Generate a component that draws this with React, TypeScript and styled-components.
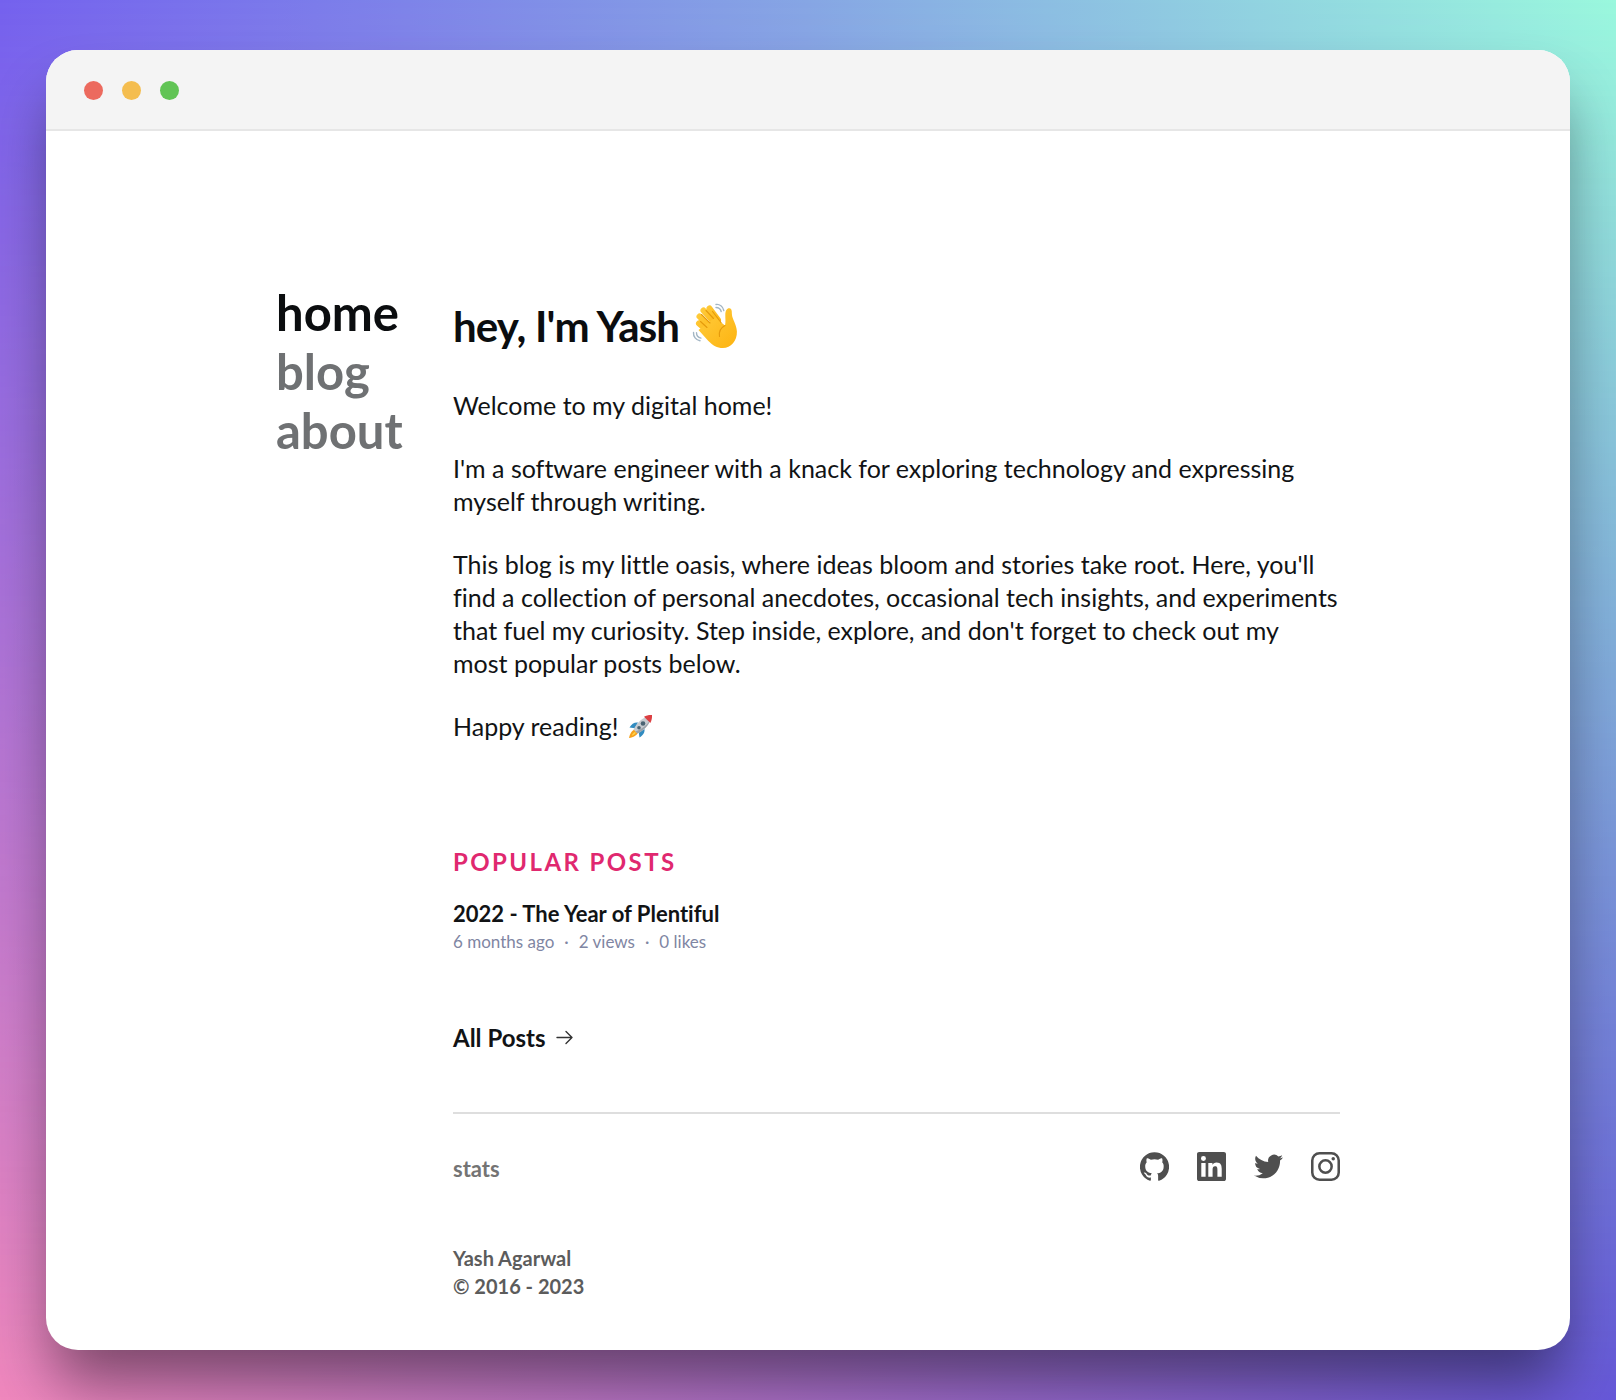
import React from "react";
import styled, { createGlobalStyle } from "styled-components";

const GlobalStyle = createGlobalStyle`
  * { box-sizing: border-box; margin: 0; padding: 0; }
  body {
    font-family: Lato, "Liberation Sans", sans-serif;
    font-variant-ligatures: none;
    color: #111315;
  }
  a { color: inherit; text-decoration: none; }
  svg { display: block; flex: none; }
`;

const Backdrop = styled.div`
  position: relative;
  isolation: isolate;
  min-height: 100vh;
  padding: 50px 46px;
  background: linear-gradient(90deg, #f088bd, #6658d8);
  &::before {
    content: "";
    position: absolute;
    inset: 0;
    z-index: -1;
    background: linear-gradient(90deg, #7461ee, #86a6e4 50%, #9af8dd);
    mask-image: linear-gradient(#000, transparent);
  }
`;

const Window = styled.div`
  border-radius: 32px;
  overflow: hidden;
  background: #fff;
  box-shadow: 0 40px 60px -8px rgba(0, 0, 0, 0.45);
`;

const TitleBar = styled.div`
  display: flex;
  align-items: center;
  gap: 19px;
  height: 81px;
  padding: 2px 38px 0;
  background: #f4f4f4;
  border-bottom: 2px solid #e6e6e6;
`;

const Dot = styled.span<{ $color: string }>`
  width: 19px;
  height: 19px;
  border-radius: 50%;
  background: ${(p) => p.$color};
`;

const Page = styled.div`
  display: grid;
  grid-template-columns: 177px minmax(0, 1fr);
  max-width: 1064px;
  margin: 0 auto;
  padding: 152px 0 50px;
`;

const Nav = styled.nav`
  display: flex;
  flex-direction: column;
  align-items: flex-start;
`;

const NavLink = styled.a<{ $active?: boolean }>`
  font-size: 49px;
  line-height: 59px;
  font-weight: 700;
  color: ${(p) => (p.$active ? "#0b0d0f" : "#6f7173")};
`;

const Title = styled.h1`
  display: flex;
  align-items: center;
  gap: 13px;
  padding-top: 18px;
  margin-bottom: 38px;
  font-size: 42px;
  line-height: 50px;
  font-weight: 700;
  letter-spacing: -0.02em;
  color: #0b0d0f;
`;

const Prose = styled.div`
  display: flex;
  flex-direction: column;
  gap: 30px;
  font-size: 25px;
  line-height: 33px;
`;

const Inline = styled.p`
  display: flex;
  align-items: center;
  gap: 10px;
`;

const SectionTitle = styled.h2`
  margin-top: 102px;
  font-size: 24px;
  line-height: 33px;
  font-weight: 700;
  letter-spacing: 0.1em;
  color: #e0286f;
`;

const PostTitle = styled.h3`
  margin-top: 21px;
  font-size: 22px;
  line-height: 29px;
  font-weight: 700;
`;

const Meta = styled.ul`
  display: flex;
  list-style: none;
  font-size: 17px;
  line-height: 28px;
  color: #7f86a3;
  li + li::before {
    content: "·";
    margin: 0 10px;
  }
`;

const AllPosts = styled.a`
  display: inline-flex;
  align-items: center;
  gap: 10px;
  margin-top: 65px;
  font-size: 24px;
  line-height: 33px;
  font-weight: 700;
`;

const Footer = styled.footer`
  margin-top: 58px;
  border-top: 2px solid #dedede;
  padding-top: 38px;
  font-size: 20px;
  line-height: 28px;
  font-weight: 700;
  color: #5c5c5c;
`;

const FooterRow = styled.div`
  display: flex;
  justify-content: space-between;
  align-items: flex-start;
  margin-bottom: 59px;
`;

const StatsLink = styled.a`
  font-size: 22px;
  line-height: 33px;
  color: #747474;
`;

const Socials = styled.div`
  display: flex;
  gap: 28px;
  color: #4f4f4f;
`;

const Wave = () => (
  <svg width="46" height="46" viewBox="0 0 46 46" role="img" aria-label="waving hand">
    <defs>
      <linearGradient id="skin" x1="0" y1="0" x2="1" y2="1">
        <stop offset="0" stopColor="#ffcd3e" />
        <stop offset="1" stopColor="#fdb310" />
      </linearGradient>
    </defs>
    <g fill="none" stroke="#a3b6c4" strokeWidth="1.4" strokeLinecap="round">
      <path d="M24 1.500c3.500-.6 7 2 7.800 6M24 4.500c2.600 0 4.600 1.600 5.200 4" />
      <path d="M1.500 29.500c-.3 4 2.400 7.500 6.500 8.200M4.500 29.800c0 2.700 1.700 4.700 4.400 5.300" />
    </g>
    <g fill="none" stroke="url(#skin)" strokeWidth="6" strokeLinecap="round">
      <path d="M22 19 11.500 7.500M26 17 17.500 5.500M18 24 7.500 13.500M17 29 7 20.500" />
    </g>
    <path
      fill="url(#skin)"
      d="M24 14c4 4 6.500 7 9 8.500.9-3.500.2-7 .3-11 .1-4.300 1.900-6.700 4.300-6.300 2.200.4 2.300 2.900 2.300 5.800.1 5 4.600 10 5 17.500.4 9-6 16.500-14 16.500-6 0-10-2.500-14.500-7L6.500 27z"
    />
    <path
      fill="none"
      stroke="#e59a0c"
      strokeWidth="1.100"
      strokeLinecap="round"
      d="M21.500 15.500 14 7.500M18 20 9.500 11.500M15 24.500 8.500 18.500M29 19.500l-8.500-11M33 22.500c-4.500 2.500-6.500 6-5.500 11"
    />
  </svg>
);

const Rocket = () => (
  <svg width="25" height="25" viewBox="0 0 25 25" role="img" aria-label="rocket">
    <path fill="#f7a11b" d="M7 15.500c-3 .5-5 4-6 8.500 4.500-.7 8-2.500 9-5.500z" />
    <path fill="#fcd34b" d="M7 18c-1.500.6-2.700 2-3.300 3.800 1.800-.5 3.400-1.600 4.200-3z" />
    <path fill="#328cc0" d="M10 8.500C6.500 8 3.500 10 1.500 13.500l5.500.8zM16.500 15c.5 3.500-1.500 6.500-5 8.500l-.8-5.500z" />
    <path fill="#c7cbd0" d="M22.800 2.200C16 2 9.500 7.500 5.500 15.500l4 4C17.500 15.500 23 9 22.800 2.200z" />
    <path fill="#9ba2a9" d="m22 6.500c-2 5.500-6.500 10-12.500 13l-2-2C14 15 18.500 11.500 22 6.500z" />
    <path fill="#dc3f42" d="M24 1c-3-.2-5.800.5-8 1.700l6.300 6.300C23.600 6.800 24.200 4 24 1z" />
    <circle cx="15" cy="9.500" r="2.300" fill="#4a6473" />
    <circle cx="11" cy="13.800" r="1.800" fill="#4a6473" />
  </svg>
);

const Arrow = () => (
  <svg width="17" height="15" viewBox="0 0 17 15" fill="none" stroke="#333" strokeWidth="1.400" strokeLinecap="round" strokeLinejoin="round" aria-hidden="true">
    <path d="M1 7.500h15M10 1.500l6 6-6 6" />
  </svg>
);

const icons = [
  {
    label: "GitHub",
    d: "M12 .3a12 12 0 0 0-3.800 23.400c.6.1.8-.3.8-.6v-2c-3.300.7-4-1.600-4-1.600-.6-1.400-1.400-1.800-1.400-1.800-1-.7.1-.7.1-.7 1.200 0 1.900 1.200 1.900 1.200 1 1.800 2.800 1.300 3.500 1 0-.8.4-1.300.7-1.600-2.700-.3-5.500-1.300-5.500-6 0-1.200.5-2.300 1.300-3.100-.2-.4-.6-1.600 0-3.200 0 0 1-.3 3.400 1.200a11.500 11.500 0 0 1 6 0c2.300-1.500 3.300-1.200 3.300-1.200.6 1.600.2 2.800 0 3.200.9.800 1.300 1.900 1.300 3.200 0 4.600-2.800 5.600-5.500 5.900.5.400.9 1 .9 2.200v3.300c0 .3.100.7.800.6A12 12 0 0 0 12 .3",
  },
  {
    label: "LinkedIn",
    d: "M20.447 20.452h-3.554v-5.569c0-1.328-.027-3.037-1.852-3.037-1.853 0-2.136 1.445-2.136 2.939v5.667H9.351V9h3.414v1.561h.046c.477-.9 1.637-1.850 3.370-1.850 3.601 0 4.267 2.370 4.267 5.455v6.286zM5.337 7.433a2.062 2.062 0 0 1-2.063-2.065 2.064 2.064 0 1 1 2.063 2.065zm1.782 13.019H3.555V9h3.564v11.452zM22.225 0H1.771C.792 0 0 .774 0 1.729v20.542C0 23.227.792 24 1.771 24h20.451C23.200 24 24 23.227 24 22.271V1.729C24 .774 23.200 0 22.222 0h.003z",
  },
  {
    label: "Twitter",
    d: "M23.954 4.569a10 10 0 0 1-2.825.775 4.958 4.958 0 0 0 2.163-2.723c-.951.555-2.005.959-3.127 1.184a4.920 4.920 0 0 0-8.384 4.482C7.691 8.094 4.066 6.130 1.640 3.161a4.822 4.822 0 0 0-.666 2.475c0 1.710.870 3.213 2.188 4.096a4.904 4.904 0 0 1-2.228-.616v.061a4.923 4.923 0 0 0 3.946 4.827 4.996 4.996 0 0 1-2.212.085 4.937 4.937 0 0 0 4.604 3.417 9.868 9.868 0 0 1-6.102 2.105c-.390 0-.779-.023-1.170-.067a13.995 13.995 0 0 0 7.557 2.209c9.054 0 13.999-7.496 13.999-13.986 0-.209 0-.420-.015-.630a9.936 9.936 0 0 0 2.460-2.548l-.047-.020z",
  },
];

const Instagram = () => (
  <svg width="29" height="29" viewBox="0 0 24 24" fill="none" stroke="currentColor" strokeWidth="2.100" aria-hidden="true">
    <rect x="1.050" y="1.050" width="21.900" height="21.900" rx="6" />
    <circle cx="12" cy="12" r="5.100" />
    <circle cx="18.400" cy="5.600" r="1.440" fill="currentColor" stroke="none" />
  </svg>
);

export default function App() {
  return (
    <>
      <GlobalStyle />
      <Backdrop>
        <Window>
          <TitleBar>
            <Dot $color="#ec6a5e" />
            <Dot $color="#f4bd4f" />
            <Dot $color="#61c455" />
          </TitleBar>
          <Page>
            <Nav>
              <NavLink href="#home" $active>home</NavLink>
              <NavLink href="#blog">blog</NavLink>
              <NavLink href="#about">about</NavLink>
            </Nav>
            <main>
              <Title>
                hey, I'm Yash <Wave />
              </Title>
              <Prose>
                <p>Welcome to my digital home!</p>
                <p>
                  I'm a software engineer with a knack for exploring technology and expressing
                  myself through writing.
                </p>
                <p>
                  This blog is my little oasis, where ideas bloom and stories take root. Here, you'll
                  find a collection of personal anecdotes, occasional tech insights, and experiments
                  that fuel my curiosity. Step inside, explore, and don't forget to check out my
                  most&nbsp;popular posts below.
                </p>
                <Inline>
                  Happy reading! <Rocket />
                </Inline>
              </Prose>
              <SectionTitle>POPULAR POSTS</SectionTitle>
              <PostTitle>
                <a href="#post">2022 - The Year of Plentiful</a>
              </PostTitle>
              <Meta>
                <li>6 months ago</li>
                <li>2 views</li>
                <li>0 likes</li>
              </Meta>
              <AllPosts href="#posts">
                All Posts <Arrow />
              </AllPosts>
              <Footer>
                <FooterRow>
                  <StatsLink href="#stats">stats</StatsLink>
                  <Socials>
                    {icons.map((icon) => (
                      <a key={icon.label} href={`#${icon.label}`} aria-label={icon.label}>
                        <svg width="29" height="29" viewBox="0 0 24 24" fill="currentColor" aria-hidden="true">
                          <path d={icon.d} />
                        </svg>
                      </a>
                    ))}
                    <a href="#Instagram" aria-label="Instagram">
                      <Instagram />
                    </a>
                  </Socials>
                </FooterRow>
                <p>Yash Agarwal</p>
                <p>© 2016 - 2023</p>
              </Footer>
            </main>
          </Page>
        </Window>
      </Backdrop>
    </>
  );
}
